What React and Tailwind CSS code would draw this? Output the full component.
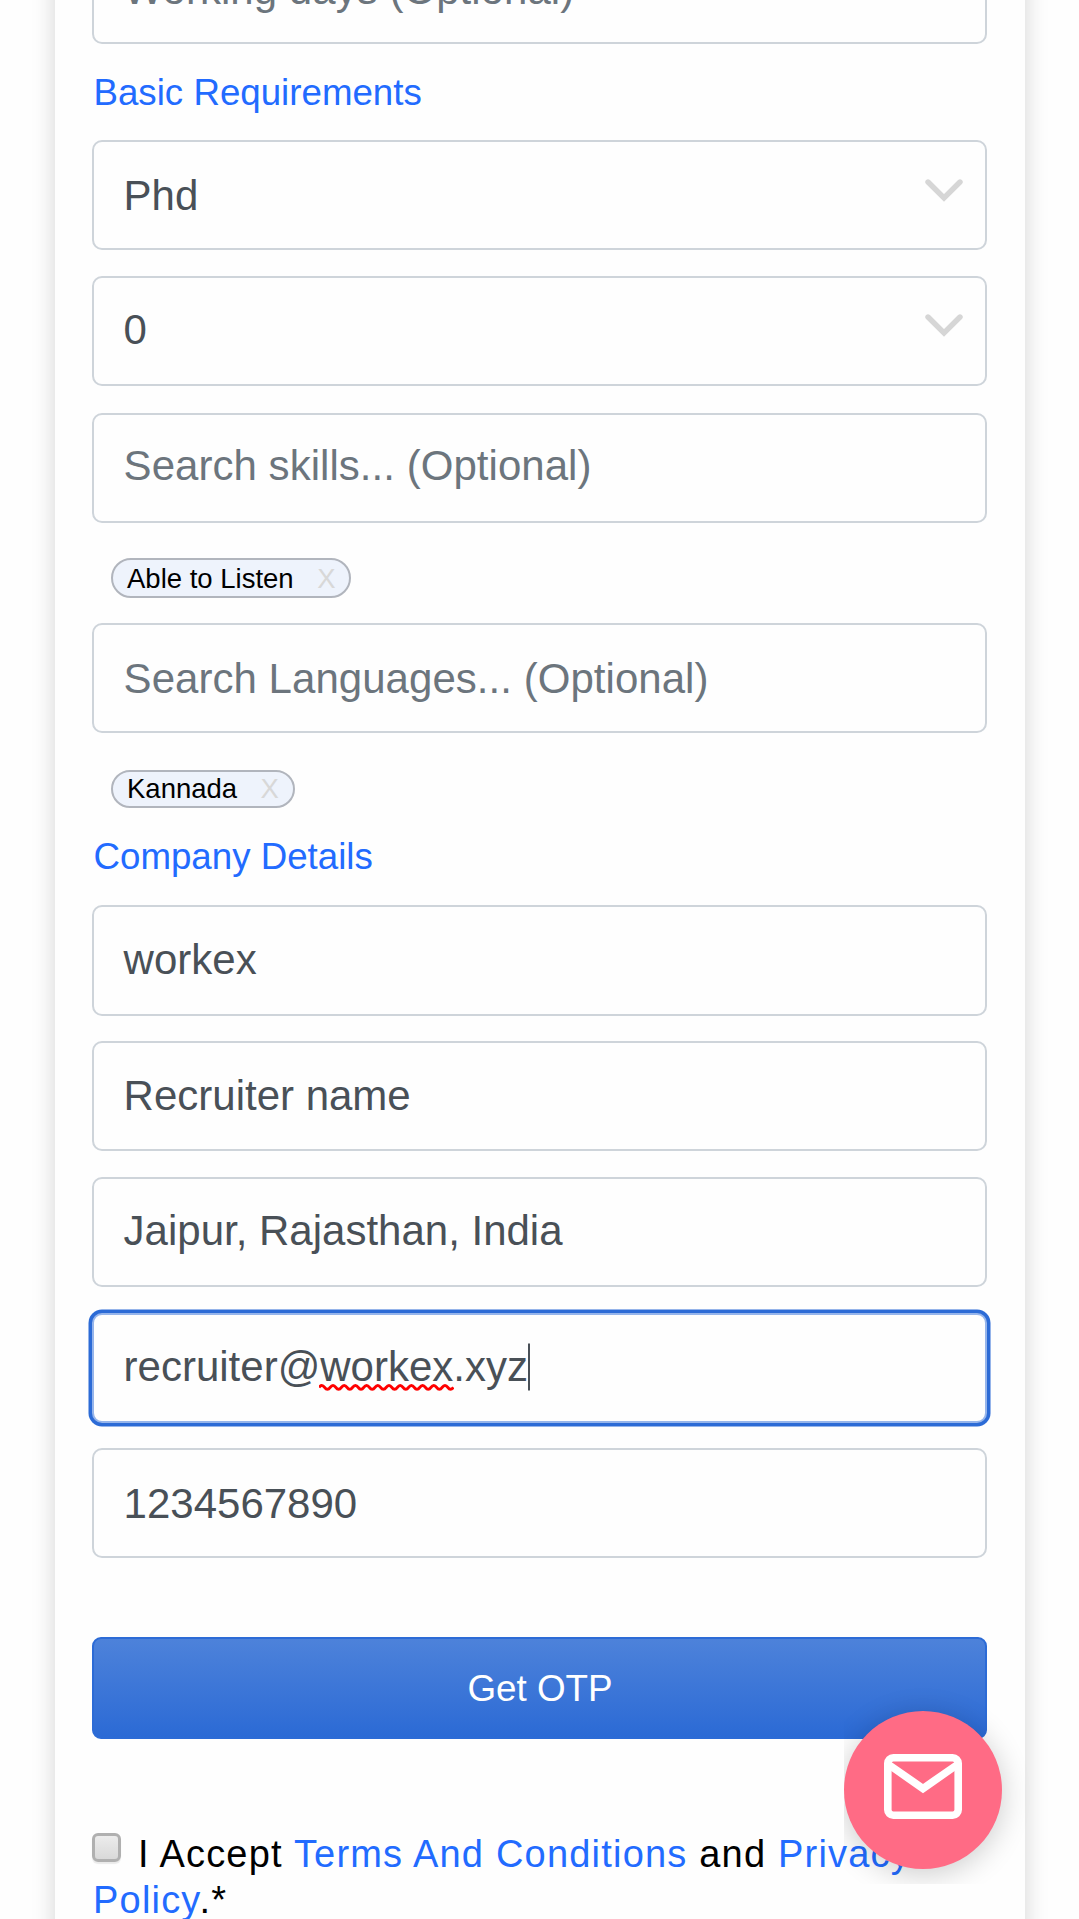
import React from "react";

function Chevron() {
  return (
    <svg className="mr-[22.5px] shrink-0" width="38" height="23" viewBox="0 0 38 23" fill="none">
      <path d="M3 3 L19 19 L35 3" stroke="#d6d6d6" strokeWidth="5.4" strokeLinecap="round" />
    </svg>
  );
}

function Field({ children, className, tone = "text-[#495057]", border = "border-[#ced4da]", select = false, chevron = "mb-[10px]" }) {
  return (
    <div className={`flex items-center justify-between rounded-[10px] border-2 bg-[#fefefe] pl-[29.6px] text-[42px] whitespace-nowrap ${border} ${tone} ${className}`}>
      <span className="relative">{children}</span>
      {select && (
        <span className={chevron}>
          <Chevron />
        </span>
      )}
    </div>
  );
}

function Heading({ children, className }) {
  return <h2 className={`h-[46px] pl-[1.5px] text-[36.7px] leading-[48px] text-[#226bff] ${className}`}>{children}</h2>;
}

function Chip({ children, className }) {
  return (
    <div className={`ml-[19px] flex w-fit items-center rounded-[20px] border-2 border-[#b1b5bd] bg-[#eef3fc] pr-[14px] pl-[14px] text-[27.5px] text-black ${className}`}>
      <span>{children}</span>
      <span className="ml-[23.5px] text-[#d8d8d8]">X</span>
    </div>
  );
}

function Squiggle() {
  const waves = Array.from({ length: 12 }, () => "q2.8 -3.8 5.6 0 t5.6 0").join(" ");
  return (
    <svg className="absolute top-full left-0 -mt-[6px] -ml-px" width="135" height="7" viewBox="0 0 135 7" fill="none">
      <path d={`M0 3.4 ${waves}`} stroke="#ff0000" strokeWidth="3" />
    </svg>
  );
}

function MailButton() {
  return (
    <div className="absolute top-[1680px] left-[844px] h-[204px] w-[200px] overflow-hidden">
      <button className="mt-[31px] flex size-[158px] items-center justify-center rounded-full bg-[#ff6b85] pb-[8px] shadow-[0_5px_30px_rgba(0,0,0,0.2)]">
        <svg width="78" height="65" viewBox="0 0 78 65" fill="none" stroke="white" strokeWidth="7.6">
          <rect x="3.8" y="3.8" width="70.4" height="57.4" rx="5.5" />
          <path d="M4.5 10.5 L39 34.5 L73.5 10.5" />
        </svg>
      </button>
    </div>
  );
}

export default function App() {
  return (
    <div className="relative h-[1919px] w-[1079px] overflow-hidden bg-[#fefefe] font-['Liberation_Sans',Arial,sans-serif]">
      <main className="-mt-[66px] ml-[55px] h-[2100px] w-[970px] bg-[#fefefe] pr-[38px] pl-[37px] shadow-[0_0_22px_rgba(0,0,0,0.17)]">
        <Field className="h-[110px] tracking-[0.04px]" tone="text-[#6c757d]">Working days (Optional)</Field>

        <Heading className="mt-[25px]">Basic Requirements</Heading>
        <Field className="mt-[25px] h-[110px]" select>Phd</Field>
        <Field className="mt-[26px] h-[110px] pb-[4px]" select chevron="mb-[7px]">0</Field>
        <Field className="mt-[27px] h-[110px] pb-[5px] tracking-[0.04px]" tone="text-[#6c757d]">Search skills... (Optional)</Field>
        <Chip className="mt-[35px] h-[40px] pt-px">Able to Listen</Chip>
        <Field className="mt-[25px] h-[110px] tracking-[0.04px]" tone="text-[#6c757d]">Search Languages... (Optional)</Field>
        <Chip className="mt-[37px] h-[38px]">Kannada</Chip>

        <Heading className="mt-[25px]">Company Details</Heading>
        <Field className="mt-[26px] h-[111px] pb-[2px]">workex</Field>
        <Field className="mt-[25px] h-[110px] pb-[2px]">Recruiter name</Field>
        <Field className="mt-[26px] h-[110px] pb-[3px]">Jaipur, Rajasthan, India</Field>
        <Field className="mt-[26px] h-[110px] pb-[3px] shadow-[0_0_0_3.5px_#2c6bd6]" border="border-[#96b5eb]">
          recruiter@
          <span className="relative">
            workex
            <Squiggle />
          </span>
          .xyz
          <span className="absolute top-1/2 left-full h-[47px] w-[2px] -translate-y-1/2 bg-[#495057]" />
        </Field>
        <Field className="mt-[25px] h-[110px]">1234567890</Field>

        <button className="mt-[79px] flex h-[102px] w-full items-center justify-center rounded-[9px] border-2 border-[#2c6bd6] bg-linear-to-b from-[#4d82da] to-[#2b6ad5] pt-px pl-px text-[36.8px] text-white">
          Get OTP
        </button>

        <div className="mt-[92px] pl-px text-[38px] leading-[46px] tracking-[1.2px] text-black">
          <span className="mr-[17px] -ml-px inline-block h-[29px] w-[29px] rounded-[6px] border-[3px] border-[#b0b0b0] bg-linear-to-b from-[#ececec] to-[#d9d9d9] align-[5px] shadow-[0_2px_1px_rgba(0,0,0,0.08)]" />
          I Accept <a className="text-[#226bff]">Terms And Conditions</a> and <a className="text-[#226bff]">Privacy<br />Policy</a><span className="-ml-[2px]">.*</span>
        </div>
      </main>
      <MailButton />
    </div>
  );
}
